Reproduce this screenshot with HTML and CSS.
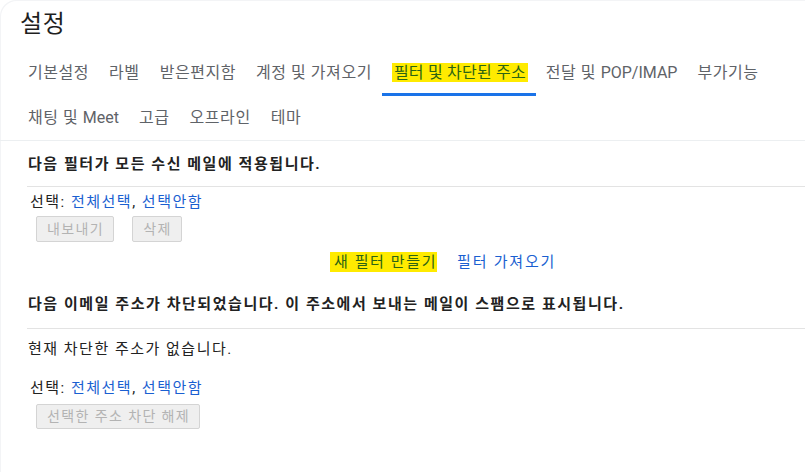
FILE: index.html
```html
<!DOCTYPE html>
<html lang="ko">
<head>
<meta charset="utf-8">
<link rel="stylesheet" href="styles.css">
</head>
<body>
<div class="page">
  <h1 class="title">설정</h1>
  <nav class="tabs">
    <div class="tab-row first">
      <span class="tab">기본설정</span>
      <span class="tab">라벨</span>
      <span class="tab">받은편지함</span>
      <span class="tab">계정 및 가져오기</span>
      <span class="tab active"><span class="mark">필터 및 차단된 주소</span></span>
      <span class="tab">전달 및 <span class="latin">POP/IMAP</span></span>
      <span class="tab">부가기능</span>
    </div>
    <div class="tab-row second">
      <span class="tab">채팅 및 <span class="latin">Meet</span></span>
      <span class="tab">고급</span>
      <span class="tab">오프라인</span>
      <span class="tab">테마</span>
    </div>
  </nav>
  <section class="content">
    <div class="heading">다음 필터가 모든 수신 메일에 적용됩니다.</div>
    <div class="rule"></div>
    <div class="select">선택: <a class="link">전체선택</a>, <a class="link">선택안함</a></div>
    <div class="buttons">
      <span class="btn">내보내기</span>
      <span class="btn">삭제</span>
    </div>
    <div class="actions">
      <span class="mark create">새 필터 만들기</span>
      <a class="link">필터 가져오기</a>
    </div>
    <div class="heading second">다음 이메일 주소가 차단되었습니다. 이 주소에서 보내는 메일이 스팸으로 표시됩니다.</div>
    <div class="rule"></div>
    <div class="plain">현재 차단한 주소가 없습니다.</div>
    <div class="select lower">선택: <a class="link">전체선택</a>, <a class="link">선택안함</a></div>
    <div class="buttons lower">
      <span class="btn">선택한 주소 차단 해제</span>
    </div>
  </section>
</div>
</body>
</html>
```
FILE: styles.css
```css
html, body {
  margin: 0;
  padding: 0;
  background: #fff;
}
body {
  font-family: Roboto, "Noto Sans CJK KR", sans-serif;
  color: #222;
}
.page {
  width: 805px;
  height: 472px;
  overflow: hidden;
  border-top-left-radius: 16px;
  box-shadow: inset 1px 1px 0 #f3f4f6;
}
.title {
  margin: 0;
  padding: 1px 0 0 20px;
  height: 47px;
  font-size: 24px;
  letter-spacing: 0.6px;
  font-weight: 400;
  line-height: 46px;
  color: #1f1f1f;
}
.tabs {
  padding-left: 18px;
  border-bottom: 1px solid #eceff1;
}
.tab-row {
  display: flex;
}
.tab-row.first {
  height: 48px;
}
.tab-row.second {
  height: 44px;
}
.tab {
  padding: 12px 10px 0 10px;
  font-size: 16px;
  letter-spacing: 0.55px;
  line-height: 20px;
  color: #5f6368;
  white-space: nowrap;
  border-bottom: 3px solid transparent;
  box-sizing: border-box;
}
.tab .latin {
  letter-spacing: 0;
}
.tab-row.first .tab {
  padding-top: 15px;
}
.tab.active {
  border-bottom-color: #1a73e8;
  padding-right: 8px;
}
.tab .mark {
  letter-spacing: 0.2px;
}
.mark {
  background: #ffeb00;
  color: #2c6414;
  padding: 0 2px;
}
.content {
  padding-left: 27px;
}
.heading {
  font-size: 15px;
  letter-spacing: 1.55px;
  font-weight: 700;
  color: #222;
  line-height: 20px;
  padding: 13px 0 0 1px;
  height: 45px;
  box-sizing: border-box;
  white-space: nowrap;
}
.heading.second {
  padding-top: 0;
  height: 34px;
}
.rule {
  height: 1px;
  background: #e3e3e3;
}
.select {
  font-size: 15px;
  letter-spacing: 1.5px;
  line-height: 20px;
  padding: 5px 0 0 3px;
  color: #222;
}
.select.lower {
  padding-top: 0;
}
.link {
  color: #1a5fd1;
  text-decoration: none;
}
.buttons {
  display: flex;
  gap: 18px;
  padding: 4px 0 0 9px;
}
.buttons.lower {
  padding-top: 6px;
}
.btn {
  border: 1px solid #d4d4d4;
  background: #efefef;
  color: #b3b3b3;
  font-size: 14px;
  letter-spacing: 1.4px;
  line-height: 24px;
  padding: 0 9px 0 10px;
  border-radius: 2px;
}
.buttons.lower .btn {
  line-height: 23px;
}
.actions {
  display: flex;
  align-items: flex-start;
  gap: 20px;
  font-size: 15px;
  letter-spacing: 1.8px;
  line-height: 20px;
  padding: 10px 0 0 303px;
  height: 52px;
  box-sizing: border-box;
}
.actions .create {
  padding: 0 0 0 4px;
  letter-spacing: 1.6px;
}
.plain {
  font-size: 15px;
  letter-spacing: 1.5px;
  line-height: 20px;
  padding: 10px 0 0 1px;
  height: 49px;
  box-sizing: border-box;
  color: #222;
}
```
